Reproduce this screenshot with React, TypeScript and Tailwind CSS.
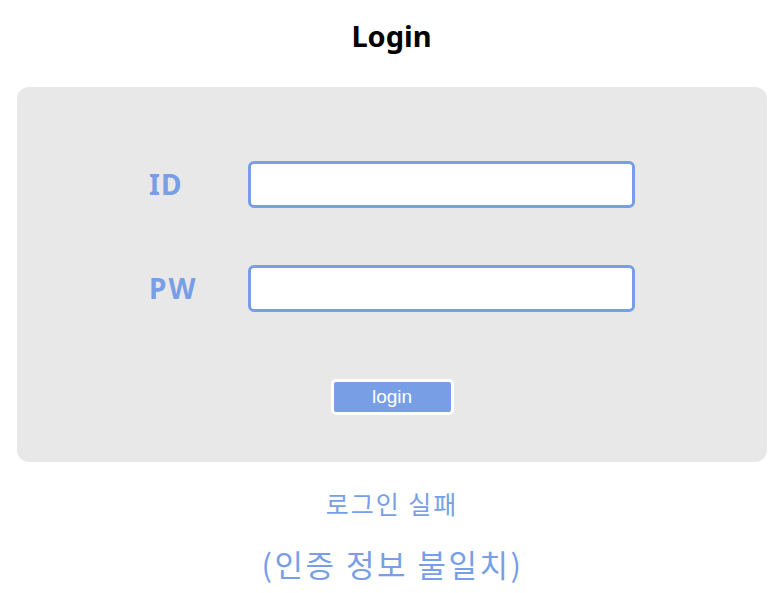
import React from 'react';

const App: React.FC = () => {
  return (
    <div className="w-[777px] h-[593px] bg-white font-['Noto_Sans','Noto_Sans_CJK_KR',sans-serif]">
      <h1 className="pt-[14px] pl-[6px] h-[87px] text-center text-[29px] font-bold leading-[44px] text-black">Login</h1>

      <div className="ml-[17px] mr-[10px] h-[375px] rounded-[12px] bg-[#e8e8e8] pt-[74px]">
        <div className="flex flex-col gap-[57px]">
          <div className="flex items-center">
            <span className="ml-[132px] w-[99px] text-[28px] font-bold leading-[47px] tracking-[1px] text-[#789fe6]">ID</span>
            <input
              type="text"
              className="h-[47px] w-[387px] rounded-[6px] border-[3px] border-[#789fe6] bg-white outline-none"
            />
          </div>
          <div className="flex items-center">
            <span className="ml-[132px] w-[99px] text-[28px] font-bold leading-[47px] tracking-[2px] text-[#789fe6]">PW</span>
            <input
              type="password"
              className="h-[47px] w-[387px] rounded-[6px] border-[3px] border-[#789fe6] bg-white outline-none"
            />
          </div>
        </div>
        <div className="mt-[67px] flex justify-center">
          <button className="h-[36px] w-[123px] rounded-[5px] border-[3px] border-white bg-[#789fe6] pb-[2px] text-[19px] leading-none text-white font-['Liberation_Sans',sans-serif]">
            login
          </button>
        </div>
      </div>

      <p className="mt-[22px] pl-[7px] text-center text-[25px] leading-[38px] tracking-[2px] text-[#789fe6] font-['Noto_Sans_CJK_KR',sans-serif]">로그인 실패</p>
      <p className="mt-[20px] pl-[8px] text-center text-[31px] leading-[44px] tracking-[2.5px] text-[#789fe6] font-['Noto_Sans_CJK_KR',sans-serif]">(인증 정보 불일치)</p>
    </div>
  );
};

export default App;
